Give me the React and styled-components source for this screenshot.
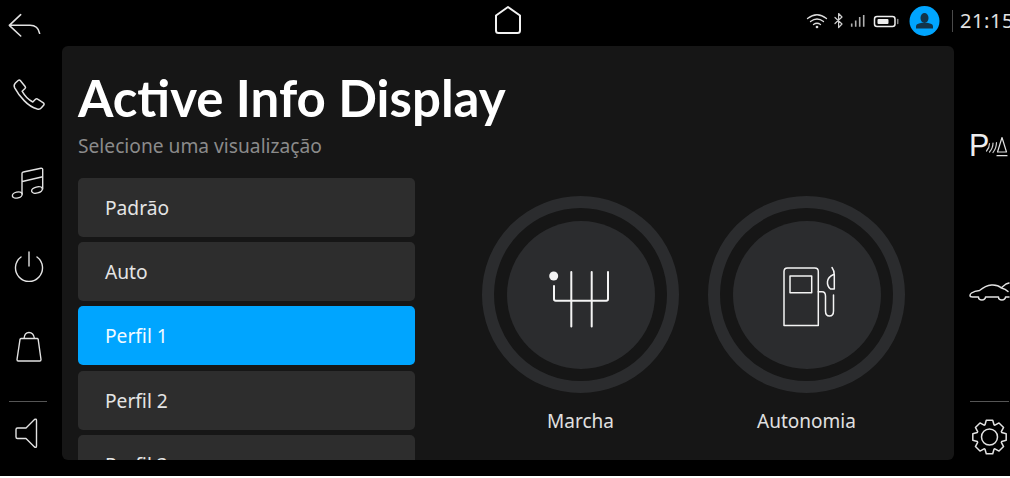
import React from 'react';
import styled, { createGlobalStyle } from 'styled-components';

const GlobalStyle = createGlobalStyle`
  html, body { margin: 0; padding: 0; background: #fff; }
  body { font-family: "Noto Sans", "Open Sans", sans-serif; }
`;

const Screen = styled.div`
  width: 1010px;
  height: 476px;
  background: #000;
  overflow: hidden;
  display: flex;
  flex-direction: column;
`;

const TopBar = styled.header`
  height: 46px;
  flex: none;
  display: flex;
  align-items: flex-start;
`;

const StatusGroup = styled.div`
  display: flex;
  flex: none;
  align-items: flex-start;
`;

const Separator = styled.div`
  width: 1px;
  height: 22px;
  flex: none;
  margin: 10px 7px 0 7px;
  background: #4a4a4a;
`;

const Clock = styled.span`
  flex: none;
  font-size: 20px;
  line-height: 42px;
  letter-spacing: 0.6px;
  color: #e2e2e2;
  white-space: nowrap;
`;

const Body = styled.div`
  display: flex;
  height: 414px;
  flex: none;
`;

const Rail = styled.nav`
  width: ${({ $width }) => $width}px;
  flex: none;
  display: flex;
  flex-direction: column;
  overflow: hidden;
`;

const RailRule = styled.div`
  height: 1px;
  flex: none;
  margin: ${({ $top }) => $top}px ${({ $right }) => $right}px 0 ${({ $left }) => $left}px;
  background: #555;
`;

const Panel = styled.main`
  width: 892px;
  flex: none;
  box-sizing: border-box;
  background: #161616;
  border-radius: 6px;
  padding-left: 16px;
  overflow: hidden;
`;

const Title = styled.h1`
  margin: 0;
  padding-top: 21px;
  font-family: Lato, "Noto Sans", sans-serif;
  font-size: 51px;
  line-height: 62px;
  font-weight: 700;
  color: #fff;
`;

const Subtitle = styled.p`
  margin: 0;
  font-size: 19.2px;
  line-height: 34px;
  color: #8b8b8b;
`;

const Content = styled.div`
  display: flex;
  margin-top: 15px;
`;

const List = styled.ul`
  list-style: none;
  margin: 0;
  padding: 0;
  width: 337px;
  flex: none;
  display: flex;
  flex-direction: column;
  gap: 5.2px;
`;

const Row = styled.li`
  height: 59px;
  flex: none;
  box-sizing: border-box;
  padding-left: 27px;
  border-radius: 5px;
  display: flex;
  align-items: center;
  font-size: 19.2px;
  color: ${({ $active }) => ($active ? '#f2faff' : '#e4e4e4')};
  background: ${({ $active }) => ($active ? '#00a5ff' : '#2d2d2d')};
`;

const Options = styled.div`
  display: flex;
  margin-left: 52.5px;
  padding-top: 18px;
`;

const Option = styled.div`
  width: 226px;
  display: flex;
  flex-direction: column;
  align-items: center;
`;

const Dial = styled.div`
  width: 197px;
  height: 197px;
  box-sizing: border-box;
  border: 12px solid #2b2c2e;
  border-radius: 50%;
  display: flex;
  align-items: center;
  justify-content: center;
`;

const DialCore = styled.div`
  width: 148px;
  height: 148px;
  border-radius: 50%;
  background: #2b2c2e;
  display: flex;
  align-items: center;
  justify-content: center;
`;

const OptionLabel = styled.span`
  margin-top: 13px;
  font-size: 19px;
  line-height: 30px;
  color: #e0e0e0;
`;

const Svg = styled.svg`
  display: block;
  flex: none;
  fill: none;
  stroke: ${({ $stroke }) => $stroke || '#e2e2e2'};
  stroke-width: ${({ $sw }) => $sw || 1.5};
  stroke-linecap: round;
  stroke-linejoin: round;
  margin-top: ${({ $mt }) => $mt || 0}px;
`;

// x/y/w/h are screen coordinates, so the paths below read straight off the reference
const Glyph = ({ x, y, w, h, children, sw, stroke, mt }) => (
  <Svg width={w} height={h} viewBox={`${x} ${y} ${w} ${h}`} $sw={sw} $stroke={stroke} $mt={mt}>
    {children}
  </Svg>
);

const gearPath = (cx, cy, outer, inner, teeth) => {
  const step = (Math.PI * 2) / teeth;
  const pts = [];
  for (let i = 0; i < teeth; i += 1) {
    const a = i * step - Math.PI / 2;
    [[-0.5, inner], [-0.27, outer], [0.27, outer], [0.5, inner]].forEach(([o, r]) => {
      const t = a + o * step * 0.9;
      pts.push(`${(cx + Math.cos(t) * r).toFixed(2)} ${(cy + Math.sin(t) * r).toFixed(2)}`);
    });
  }
  return `M${pts.join('L')}Z`;
};

const profiles = ['Padrão', 'Auto', 'Perfil 1', 'Perfil 2', 'Perfil 3'];

export default function App() {
  return (
    <Screen>
      <GlobalStyle />
      <TopBar>
        <Glyph x={0} y={0} w={485} h={46} sw={1.6}>
          <path d="M20.7 14.7 9.3 25.3 20.7 36M9.3 25.3H30q8 0 9.600 8" />
        </Glyph>
        <Glyph x={485} y={0} w={321} h={46} sw={2} stroke="#f2f2f2">
          <path d="M508 7 520 15.500V30.500q0 2.500-2.500 2.500h-19q-2.500 0-2.500-2.500V15.500Z" />
        </Glyph>
        <StatusGroup>
          <Glyph x={806} y={0} w={24} h={46} sw={1.3} stroke="#dcdcdc">
            <path d="M807.500 18.500q9.500-7.500 19 0M810.500 21.500q6.500-5 13 0M813.500 24.500q3.500-2.500 7 0" />
            <circle cx="817" cy="27" r="0.700" />
          </Glyph>
          <Glyph x={830} y={0} w={18} h={46} sw={1.2} stroke="#cfcfcf">
            <path d="M835 17.500 842 24 838.600 27.500V13.500L842 17 835 23.500" />
          </Glyph>
          <Glyph x={848} y={0} w={22} h={46} sw={1.6} stroke="#b0b0b0">
            <path d="M851.700 26.700V23.500M855.700 26.700V20.500M859.700 26.700V17M863.700 26.700V15" strokeLinecap="butt" />
          </Glyph>
          <Glyph x={870} y={0} w={34} h={46} sw={1.5} stroke="#eee">
            <rect x="874.500" y="16.500" width="20.500" height="10" rx="2.500" />
            <rect x="877.500" y="19" width="11" height="5" rx="1" fill="#eee" stroke="none" />
            <path d="M897.700 19.500V23.500" stroke="#888" />
          </Glyph>
          <Glyph x={904} y={0} w={41} h={46} stroke="none">
            <circle cx="924.500" cy="21" r="15" fill="#00a5ff" />
            <ellipse cx="924.500" cy="18" rx="4" ry="5" fill="#12344a" />
            <path d="M916 28.500v-2q0-2.500 3-3l3-.8h5l3 .8q3 .5 3 3v2Z" fill="#12344a" />
          </Glyph>
        </StatusGroup>
        <Separator />
        <Clock>21:15</Clock>
      </TopBar>
      <Body>
        <Rail $width={62}>
          <Glyph x={0} y={76} w={62} h={38} mt={30} sw={1.4}>
            <path transform="translate(14 80) scale(1.080) translate(-14 -80)" d="M14.500 87q-1-2.500.8-4.200l2.500-2.300q1.200-1 2.200.2l4.300 5.300q.8 1-.1 1.900l-2.700 2.500q1.800 3.300 4.300 5.800t5.600 4.200l2.500-2.500q1-1 2-.2l5.300 3.500q1.200.9.2 2.200l-2 2.300q-1.500 1.800-3.800 1.200-6.700-2-12.200-7.800t-8.900-12.100Z" />
          </Glyph>
          <Glyph x={0} y={164} w={62} h={38} mt={50} sw={1.4}>
            <path d="M22 194V173.500q0-1.300 1.300-1.500l17.700-3.700q1.700-.2 1.700 1.300V189M22.300 181.500l20.400-4.800" />
            <ellipse cx="17.300" cy="195" rx="5" ry="3" transform="rotate(-14 17.300 195)" />
            <ellipse cx="37" cy="190" rx="5.500" ry="3" transform="rotate(-14 37 190)" />
          </Glyph>
          <Glyph x={0} y={249} w={62} h={36} mt={47} sw={1.4}>
            <path d="M21 257A13.500 13.500 0 1 0 37 257M29 252V266" />
          </Glyph>
          <Glyph x={0} y={330} w={62} h={34} mt={45} sw={1.4}>
            <path d="M21 338.500H37.500Q38 338.500 38.200 339.500L41 359.500Q41 361 39.800 361H18.200Q17 361 17 359.500L20 339.500Q20.200 338.500 21 338.500ZM24 338.500Q24.500 332.500 29 332.500T34.500 338.500" />
          </Glyph>
          <RailRule $top={37} $left={9} $right={15} />
          <Glyph x={0} y={416} w={62} h={34} mt={14} sw={1.4}>
            <path d="M36.500 420.500V446q0 2-2 1L26 438.500H17.500q-1.500 0-1.500-1.500V429.500q0-1.500 1.500-1.500H26L34.500 419.500q2-1 2 1Z" />
          </Glyph>
        </Rail>
        <Panel>
          <Title>Active Info Display</Title>
          <Subtitle>Selecione uma visualização</Subtitle>
          <Content>
            <List>
              {profiles.map((name) => (
                <Row key={name} $active={name === 'Perfil 1'}>{name}</Row>
              ))}
            </List>
            <Options>
              <Option>
                <Dial>
                  <DialCore>
                    <Glyph x={545} y={264} w={71} h={61 + 4} sw={2} stroke="#f4f4f4" mt={4}>
                      <circle cx="553.700" cy="276" r="4.500" fill="#f4f4f4" stroke="none" />
                      <path d="M554 286V299q0 1.700 1.700 1.700H606.300q1.700 0 1.700-1.700V272M571.300 272V326.500M591.700 272V326.500" />
                    </Glyph>
                  </DialCore>
                </Dial>
                <OptionLabel>Marcha</OptionLabel>
              </Option>
              <Option>
                <Dial>
                  <DialCore>
                    <Glyph x={776} y={264} w={61} h={65} stroke="#f4f4f4" mt={4}>
                      <path d="M784 325.500V271.500q0-3.500 3.500-3.500h27.300q3.500 0 3.500 3.500V325.500Z" />
                      <rect x="790" y="276" width="21.700" height="16.700" />
                      <path d="M818.300 291.700H822q3.500 0 3.500 4.500V311q0 5 4 5t4-5V295" />
                      <path d="M832 267.500q2.300 3 2.300 7.500V289H830.500q-3.500-3-3-7.500T833.500 274.500" />
                    </Glyph>
                  </DialCore>
                </Dial>
                <OptionLabel>Autonomia</OptionLabel>
              </Option>
            </Options>
          </Content>
        </Panel>
        <Rail $width={56}>
          <Glyph x={954} y={128} w={56} h={34} mt={82} sw={1.2}>
            <text x="969" y="156" fontFamily="Liberation Sans, sans-serif" fontSize="30.500" fill="#eee" stroke="none">P</text>
            <path d="M986.500 151q3-3.500 3-7.500M989.500 152q3.500-4 3.500-9M993 152.500q3.500-4.500 3.500-10" stroke="#ccc" />
            <path d="M1002 137.500 1006.500 152H997.500ZM997 155.700H1007" />
          </Glyph>
          <Glyph x={954} y={278} w={56} h={26} mt={116}>
            <path d="M978.500 297H972.500q-2.500 0-2.500-1.500t1.500-2.500q3-2 8-2.500 6-5 12-5.500 6-.5 10 3 4 1 6.500 3.500M985.500 297H998.500M1005.500 297H1009M1001 288 1006 284 1009 283M978.500 297a3.500 3 0 0 0 7 0M998.500 297a3.500 3 0 0 0 7 0" />
          </Glyph>
          <RailRule $top={97} $left={16} $right={1} />
          <Glyph x={954} y={416} w={56} h={42} mt={14}>
            <path d={gearPath(989.500, 437, 17, 13, 8)} />
            <circle cx="989.500" cy="437" r="8" />
          </Glyph>
        </Rail>
      </Body>
    </Screen>
  );
}
